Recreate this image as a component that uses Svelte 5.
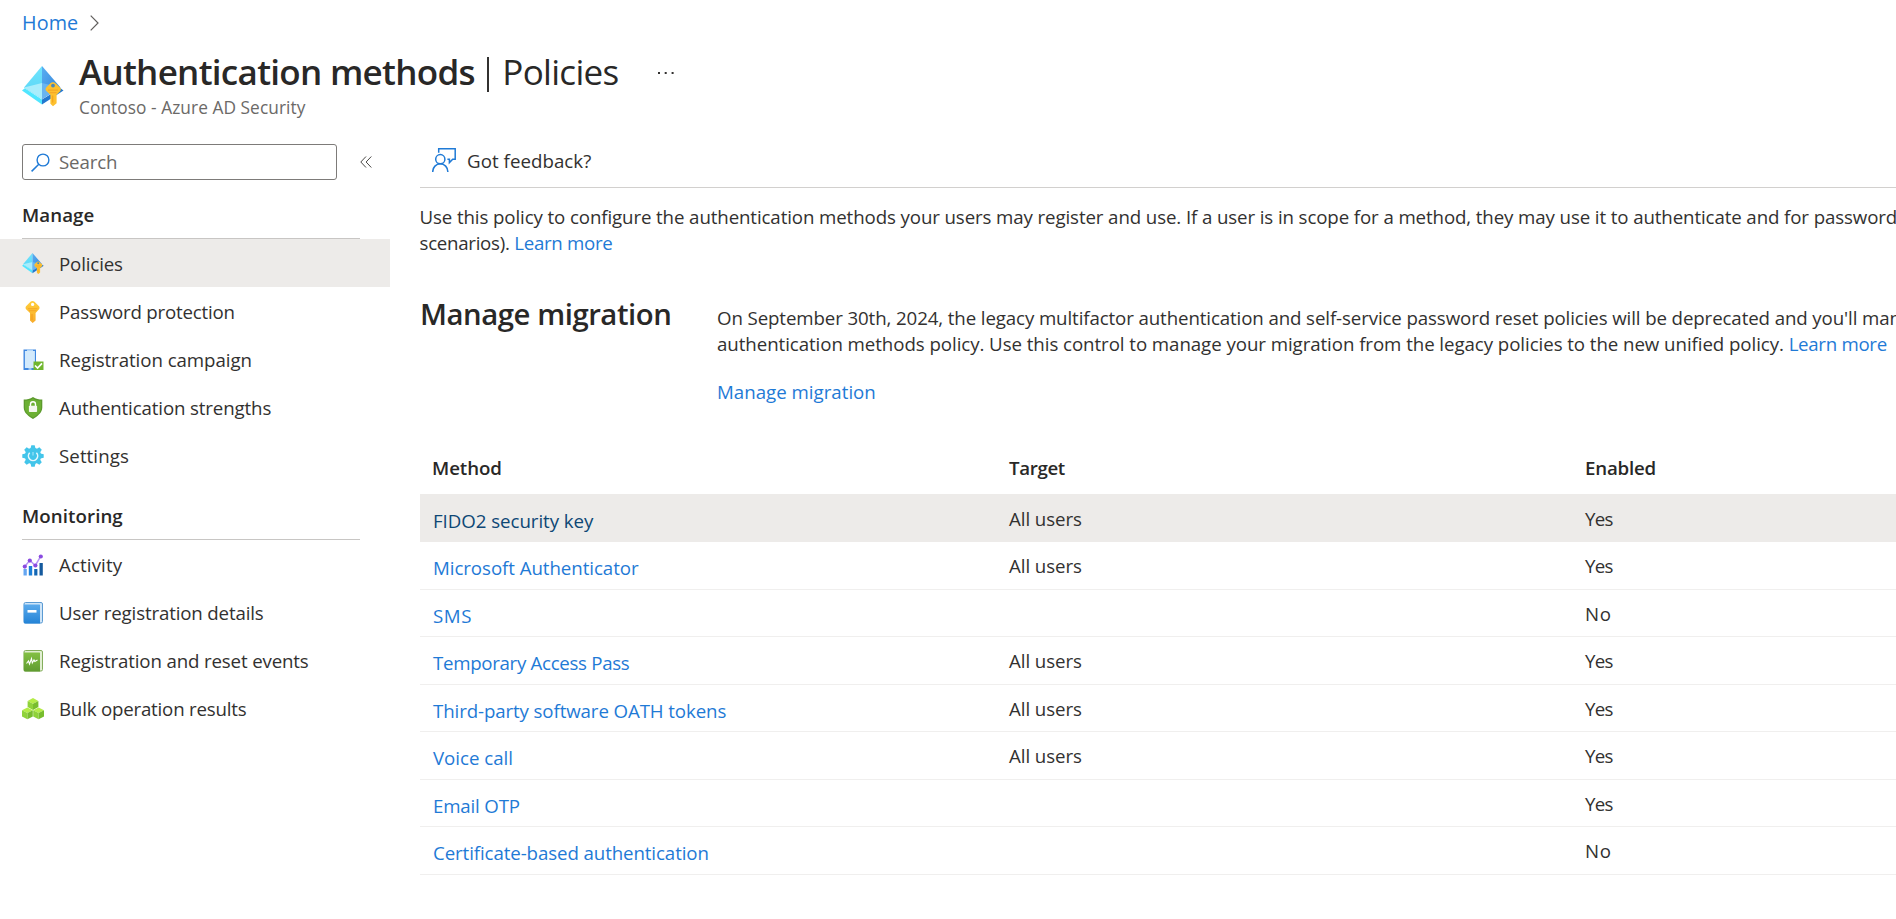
<script>
  const manage = [
    { icon: 'pyramid', label: 'Policies', ls: -0.14, active: true },
    { icon: 'key', label: 'Password protection', ls: -0.2 },
    { icon: 'phone', label: 'Registration campaign', ls: -0.06 },
    { icon: 'shield', label: 'Authentication strengths', ls: -0.13 },
    { icon: 'gear', label: 'Settings', ls: 0.07 }
  ];
  const monitoring = [
    { icon: 'chart', label: 'Activity', ls: 0.12 },
    { icon: 'book', label: 'User registration details', ls: -0.15 },
    { icon: 'log', label: 'Registration and reset events', ls: -0.15 },
    { icon: 'cubes', label: 'Bulk operation results', ls: -0.2 }
  ];
  const groups = [
    { title: 'Manage', items: manage },
    { title: 'Monitoring', items: monitoring }
  ];
  const methods = [
    { name: 'FIDO2 security key', target: 'All users', enabled: 'Yes', ls: -0.05, hover: true },
    { name: 'Microsoft Authenticator', target: 'All users', enabled: 'Yes', ls: -0.06 },
    { name: 'SMS', target: '', enabled: 'No', ls: 0.6 },
    { name: 'Temporary Access Pass', target: 'All users', enabled: 'Yes', ls: -0.31 },
    { name: 'Third-party software OATH tokens', target: 'All users', enabled: 'Yes', ls: -0.11 },
    { name: 'Voice call', target: 'All users', enabled: 'Yes', ls: -0.03 },
    { name: 'Email OTP', target: '', enabled: 'Yes', ls: -0.17 },
    { name: 'Certificate-based authentication', target: '', enabled: 'No', ls: -0.1 }
  ];
</script>

{#snippet pyramid(id)}
  <svg viewBox="0 0 42 41" aria-hidden="true">
    <defs>
      <linearGradient id="{id}l" x1="0" y1="0" x2="0" y2="1"><stop offset="0" stop-color="#6fe4fd" /><stop offset="1" stop-color="#58d4f5" /></linearGradient>
      <linearGradient id="{id}r" x1="0" y1="0" x2="1" y2="1"><stop offset="0" stop-color="#5aaef2" /><stop offset="1" stop-color="#2f7fd6" /></linearGradient>
    </defs>
    <path d="M20 0 2 21.5 20 33z" fill="url(#{id}l)" />
    <path d="M20 0 38.5 21.5 20 33z" fill="url(#{id}r)" />
    <path d="M20 17 2 21.5 20 33z" fill="#a9edfc" />
    <path d="M20 17 38.5 21.5 20 33z" fill="#69b4f0" />
    <path d="M0 24.5 2.800 22.300 20 33.600V38.500z" fill="#50e6ff" />
    <path d="M41.500 24.500 38.500 22.300 20 33.600V38.500z" fill="#2378cf" />
    <path d="M30.800 16.200c1.200 0 2.100.4 3 1.300l4.200 4c1.100 1.200 1.100 2.800 0 4l-3.400 3.300v8.400L31 40.300l-2.600-2.600v-9l-4-3.600c-1.100-1.100-1.100-2.800 0-3.900l4-3.900c.7-.7 1.500-1.100 2.400-1.100z" fill="#fdc02f" />
    <path d="M26 24.200h10M27.500 26.600h7" stroke="#f5a827" stroke-width="1.200" />
    <circle cx="31" cy="19.600" r="1.900" fill="#4b88b8" />
    <path d="M30.700 29.500v7" stroke="#f5a31c" stroke-width="1.200" />
  </svg>
{/snippet}

{#snippet icon(name)}
  {#if name === 'pyramid'}
    {@render pyramid('s')}
  {:else if name === 'key'}
    <svg viewBox="0 0 22 22" aria-hidden="true">
      <defs><linearGradient id="ky" x1="0" y1="0" x2="0" y2="1"><stop stop-color="#ffce3a" /><stop offset="1" stop-color="#f8ab2b" /></linearGradient></defs>
      <path d="M10.500 0c.8 0 1.400.3 2 .8l4.300 4.100c1 1 1 2.500 0 3.500L13.600 12v7.400L10.700 22 8 19.400V12L4.300 8.400c-1-1-1-2.500 0-3.500L8.500.8c.6-.5 1.200-.8 2-.8z" fill="url(#ky)" />
      <circle cx="10.600" cy="3.400" r="1.600" fill="#fff" />
      <path d="M6 7.700h9.400M7 9.700h7.400" stroke="#f5a827" stroke-width="1" />
      <path d="M10 13v6" stroke="#f29a1c" stroke-width="1" />
    </svg>
  {:else if name === 'phone'}
    <svg viewBox="0 0 22 22" aria-hidden="true">
      <path d="M1.500.5h12.500v20.500H1.500z" fill="#3f87e0" />
      <path d="M2.900 2h10v17h-10z" fill="#d3eafc" />
      <path d="M5 .5h6v1.500H5zM6.500 19.300h3v1.500h-3z" fill="#b4d7f8" />
      <path d="M11.500 12.500H21.500V21h-10z" fill="#70b62f" />
      <path d="m13 16.500 2.600 2.500 4.400-4.700" fill="none" stroke="#fff" stroke-width="1.700" />
    </svg>
  {:else if name === 'shield'}
    <svg viewBox="0 0 22 22" aria-hidden="true">
      <path d="M11 0c2.900 2.300 6 2.500 9.300 2.600v8c0 5.500-5.300 9-9.300 11.400C7 19.600 1.700 16.100 1.700 10.600v-8C5 2.500 8.100 2.300 11 0z" fill="#5c9a2d" />
      <path d="M11 1.400c2.500 1.900 5.200 2.200 8 2.300v7c0 4.700-4.500 7.800-8 9.900-3.500-2.100-8-5.200-8-9.900v-7c2.800-.1 5.500-.4 8-2.300z" fill="#6cb033" />
      <path d="M8.500 9.500V7.200a2.500 2.500 0 0 1 5 0v2.300" fill="none" stroke="#fff" stroke-width="1.400" />
      <rect x="6.900" y="8.800" width="8.200" height="6.200" rx=".8" fill="#f3f7ee" />
    </svg>
  {:else if name === 'gear'}
    <svg viewBox="0 0 22 22" aria-hidden="true">
      <g fill="#43c5ea">
        <circle cx="11" cy="11" r="8.200" />
        {#each [0, 45, 90, 135] as a}
          <path d="M9.300.3h3.400l.8 3.200v15l-.8 3.200H9.300l-.8-3.200v-15z" transform="rotate({a} 11 11)" />
        {/each}
      </g>
      <path d="M7.700 7.800a4.600 4.600 0 1 0 6.700 0" fill="none" stroke="#e6f8fe" stroke-width="1.600" />
      <path d="M11 7v3.500" stroke="#8fdff5" stroke-width="1.400" />
    </svg>
  {:else if name === 'chart'}
    <svg viewBox="0 0 22 22" aria-hidden="true">
      <path d="M1.500 15h3.300v6.500H1.500z" fill="#65a6f2" />
      <path d="M6.800 12h3.400v9.500H6.800z" fill="#1c7fd8" />
      <path d="M12.200 15h3.200v6.500h-3.200z" fill="#1266b4" />
      <path d="M17.500 9h3.300v12.500h-3.300z" fill="#155a9e" />
      <path d="m2.800 12.500 5-6.200 5.500 5.200 5.500-9.300" fill="none" stroke="#b796f5" stroke-width="1.500" />
      <g fill="#8a4be0"><circle cx="2.800" cy="12.600" r="2.100" /><circle cx="7.800" cy="6.600" r="2.100" /><circle cx="13.400" cy="11.500" r="2.100" /><circle cx="18.800" cy="2.500" r="2.100" /></g>
    </svg>
  {:else if name === 'book'}
    <svg viewBox="0 0 22 22" aria-hidden="true">
      <defs><linearGradient id="bk" x1="0" y1="0" x2="0" y2="1"><stop stop-color="#5aaaec" /><stop offset="1" stop-color="#2483d6" /></linearGradient></defs>
      <rect x="2" y=".5" width="18.500" height="20.500" rx="1.500" fill="#cfe5f8" stroke="#5b9bd3" />
      <path d="M1.800 2.500h15.700q.5 0 .5.500V21.500H3q-1.200 0-1.200-1.200z" fill="url(#bk)" />
      <path d="M5.500 8h9v2.600h-9z" fill="#fff" />
    </svg>
  {:else if name === 'log'}
    <svg viewBox="0 0 22 22" aria-hidden="true">
      <defs><linearGradient id="lg" x1="0" y1="0" x2="0" y2="1"><stop stop-color="#83c043" /><stop offset="1" stop-color="#5f9b30" /></linearGradient></defs>
      <rect x="2" y=".5" width="18.500" height="20.500" rx="1.500" fill="#e1efd2" stroke="#84ae5c" />
      <path d="M1.800 2.500h15.700q.5 0 .5.500V21.500H3q-1.200 0-1.200-1.200z" fill="url(#lg)" />
      <path d="m4.500 13.500 2-2.500 1 3 2-5.500.8 4.500 1.700-3 .8 1.500 2.700-1.500" fill="none" stroke="#fff" stroke-width="1.100" />
    </svg>
  {:else}
    <svg viewBox="0 0 22 22" aria-hidden="true">
      {#each [[11, 0.1], [5.4, 9.4], [16.600, 9.4]] as [x, y]}
        <g transform="translate({x} {y})">
          <path d="M0 0 5.400 2.800 0 5.700-5.400 2.800z" fill="#b4ec47" />
          <path d="M-5.400 2.800 0 5.700v6.200L-5.400 9z" fill="#8fd23a" />
          <path d="M5.400 2.800 0 5.700v6.200L5.400 9z" fill="#78bd2e" />
        </g>
      {/each}
    </svg>
  {/if}
{/snippet}

<div class="page">
  <nav class="crumbs">
    <a href="#home">Home</a>
    <svg width="9" height="16" viewBox="0 0 9 16" aria-hidden="true"><path d="m.7.7 7.300 7.300L.7 15.300" fill="none" stroke="#605e5c" stroke-width="1.200" /></svg>
  </nav>

  <header>
    <span class="logo">{@render pyramid('b')}</span>
    <div class="titles">
      <h1><strong>Authentication methods</strong><i class="bar"></i><span>Policies</span>
        <svg class="dots" width="18" height="4" viewBox="0 0 18 4" aria-hidden="true"><path d="M1 1h2v2H1zM7.700 1h2v2h-2zM14.600 1h2v2h-2z" fill="#323130" /></svg>
      </h1>
      <p>Contoso - Azure AD Security</p>
    </div>
  </header>

  <div class="body">
    <aside>
      <div class="search-row">
        <div class="search">
          <svg width="19" height="19" viewBox="0 0 19 19" aria-hidden="true"><circle cx="12" cy="7" r="5.900" fill="none" stroke="#1f7ad6" stroke-width="1.400" /><path d="M7.800 11.200.6 18.400" stroke="#1f7ad6" stroke-width="1.500" /></svg>
          <span>Search</span>
        </div>
        <svg width="12" height="12" viewBox="0 0 12 12" aria-hidden="true"><path d="M6 .5.8 6 6 11.500M11.300.5 6.100 6l5.200 5.500" fill="none" stroke="#494846" /></svg>
      </div>
      {#each groups as group}
        <section>
          <h3>{group.title}</h3>
          {#each group.items as item}
            <div class="item" class:active={item.active}>
              <span class="ico">{@render icon(item.icon)}</span>
              <span style="letter-spacing:{item.ls}px">{item.label}</span>
            </div>
          {/each}
        </section>
      {/each}
    </aside>

    <main>
      <div class="toolbar">
        <svg width="24" height="24" viewBox="0 0 24 24" fill="none" stroke="#1f7ad6" stroke-width="1.500" aria-hidden="true">
          <circle cx="8.300" cy="11.200" r="4.600" />
          <path d="M.7 24c0-4.700 3.400-8.200 7.600-8.200s7.600 3.500 7.600 8.200M6.700 4.800V.8h16.500v10.500h-2.500l-3.300 3.300v-3.300h-2" />
        </svg>
        <span>Got feedback?</span>
      </div>

      <p class="intro">
        Use this policy to configure the authentication methods your users may register and use. If a user is in scope for a method, they may use it to authenticate and for password<br />
        <span class="tail">scenarios).</span> <a class="more" href="#learn">Learn more</a>
      </p>

      <div class="migration">
        <h2>Manage migration</h2>
        <div>
          <p>
            On September 30th, 2024, the legacy multifactor authentication and self-service password reset policies will be deprecated and you'll manage<br />
            <span class="second">authentication methods policy. Use this control to manage your migration from the legacy policies to the new unified policy.</span> <a class="more" href="#learn">Learn more</a>
          </p>
          <a class="go" href="#migrate">Manage migration</a>
        </div>
      </div>

      <div class="table">
        <div class="tr head"><span>Method</span><span class="tg">Target</span><span class="en">Enabled</span></div>
        {#each methods as m}
          <div class="tr" class:hover={m.hover}>
            <a href="#method" style="letter-spacing:{m.ls}px">{m.name}</a>
            <span>{m.target}</span>
            <span class={m.enabled === 'Yes' ? 'yes' : 'no'}>{m.enabled}</span>
          </div>
        {/each}
      </div>
    </main>
  </div>
</div>

<style>
  :global(body) { margin: 0; background: #fff; overflow: hidden; }
  .page {
    width: 100vw; height: 100vh; overflow: hidden; box-sizing: border-box;
    font: 18.7px/26px "Open Sans", "Noto Sans", sans-serif; color: #323130;
    white-space: nowrap;
  }
  svg { display: block; flex: none; }
  h1, h2, h3, p { margin: 0; font-weight: 400; }
  a { color: #1f7ad6; text-decoration: none; }

  .crumbs { display: flex; align-items: center; gap: 12px; height: 46px; padding: 0 0 1px 22px; box-sizing: border-box; }
  .crumbs a { font-size: 19.8px; letter-spacing: 0.1px; }

  header { display: flex; padding-left: 22px; height: 98px; }
  .logo { width: 42px; padding-top: 20px; margin-right: 15px; }
  .titles h1 { display: flex; align-items: center; height: 52px; font-size: 35px; line-height: 52px; color: #292827; }
  .titles strong { font-weight: 600; letter-spacing: -0.7px; }
  .bar { width: 2.5px; height: 35px; margin: 4px 13px 0 12px; background: #323130; }
  .titles h1 span { letter-spacing: -0.7px; }
  .dots { margin: 2px 0 0 39px; }
  .titles p { font-size: 17.3px; line-height: 24px; margin-top: -2px; letter-spacing: 0.06px; color: #6b6967; }

  .body { display: flex; }
  aside { width: 390px; flex: none; }
  .search-row { display: flex; align-items: center; gap: 23px; padding-left: 22px; }
  .search { display: flex; align-items: center; gap: 9px; width: 315px; height: 36px; box-sizing: border-box; border: 1px solid #7d7b79; border-radius: 3px; padding-left: 8px; color: #6b6967; }
  .search span { letter-spacing: -0.15px; }
  h3 { margin: 0 0 0 22px; width: 338px; height: 59px; box-sizing: border-box; padding-top: 22px; border-bottom: 1px solid #c8c6c4; font-size: 18.7px; font-weight: 600; letter-spacing: 0.08px; color: #292827; }
  section + section h3 { height: 61px; padding-top: 24px; }
  section + section .item:nth-of-type(1) { margin-top: 1px; }
  .item { display: flex; align-items: center; gap: 15px; height: 48px; box-sizing: border-box; padding: 1px 0 0 22px; }
  section + section .item { padding-top: 0; }
  .item.active { background: #edebe9; }
  .ico { width: 22px; }

  main { margin-left: 30px; flex: 1; min-width: 0; }
  .toolbar { display: flex; align-items: center; gap: 11px; height: 44px; box-sizing: border-box; padding: 0 0 11px 12px; border-bottom: 1px solid #d2d0ce; }
  .toolbar span { padding-top: 1px; letter-spacing: 0.05px; }
  .intro { margin: 16px 0 0 -0.5px; letter-spacing: -0.11px; }
  .tail { letter-spacing: -0.28px; }
  .more { letter-spacing: -0.3px; }
  .migration { display: flex; margin-top: 38px; height: 143px; }
  h2 { width: 297px; flex: none; font-size: 29.3px; line-height: 40px; font-weight: 600; letter-spacing: -0.45px; color: #292827; }
  .migration p { margin-top: 11px; letter-spacing: -0.11px; }
  .second { letter-spacing: -0.064px; }
  .go { display: block; margin-top: 22px; letter-spacing: 0; }

  .tr { display: grid; grid-template-columns: 577px 576px 1fr; align-items: center; height: 47.5px; box-sizing: border-box; padding: 2px 0 0 12px; border-bottom: 1px solid #f0efee; }
  .tr a { padding-left: 1px; position: relative; top: 2px; }
  .tr span { letter-spacing: -0.06px; }
  .tr .yes { letter-spacing: -0.7px; }
  .tr .no { letter-spacing: 0.6px; }
  .head { height: 57px; padding: 5px 0 0 12px; border: 0; font-weight: 600; color: #292827; }
  .head .tg { letter-spacing: -0.35px; }
  .head .en { letter-spacing: -0.2px; }
  .hover { height: 48px; background: #edebe9; border-color: #edebe9; }
  .hover a { color: #0e4775; }
</style>
